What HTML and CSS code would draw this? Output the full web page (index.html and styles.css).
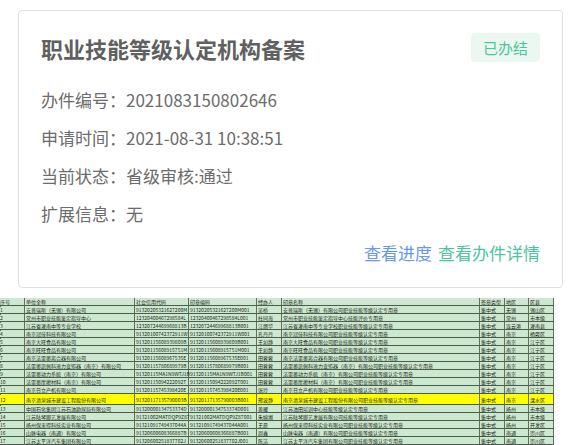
FILE: index.html
```html
<!DOCTYPE html>
<html lang="zh-CN">
<head>
<meta charset="utf-8">
<meta name="viewport" content="width=device-width, initial-scale=1">
<title>职业技能等级认定机构备案</title>
<link rel="stylesheet" href="styles.css">
</head>
<body>
<main>
<section class="card">
  <header class="card-head">
    <h1>职业技能等级认定机构备案</h1>
    <span class="badge">已办结</span>
  </header>
  <dl class="info">
    <div><dt>办件编号：</dt><dd>2021083150802646</dd></div>
    <div><dt>申请时间：</dt><dd>2021-08-31 10:38:51</dd></div>
    <div><dt>当前状态：</dt><dd>省级审核:通过</dd></div>
    <div><dt>扩展信息：</dt><dd>无</dd></div>
  </dl>
  <nav class="actions">
    <a class="progress" href="#progress">查看进度</a>
    <a class="detail" href="#detail">查看办件详情</a>
  </nav>
</section>
<div class="sheet">
<table>
  <colgroup><col class="c-no"><col class="c-unit"><col class="c-code"><col class="c-seal"><col class="c-agent"><col class="c-name"><col class="c-type"><col class="c-city"><col class="c-area"></colgroup>
  <thead>
    <tr><th>序号</th><th>单位全称</th><th>社会信用代码</th><th>印章编码</th><th>经办人</th><th>印章名称</th><th>签章类型</th><th>地区</th><th>区县</th></tr>
  </thead>
  <tbody>
    <tr><td>1</td><td>安普瑞斯（无锡）有限公司</td><td>91320205321627200M</td><td>91320205321627200M001</td><td>吴桥</td><td>安普瑞斯（无锡）有限公司职业技能等级认定专用章</td><td>集中式</td><td>无锡</td><td>锡山区</td></tr>
    <tr><td>2</td><td>常州市职业技能鉴定指导中心</td><td>12320400467298584L</td><td>12320400467298584L001</td><td>杜同海</td><td>常州市职业技能鉴定指导中心技能评价专用章</td><td>集中式</td><td>常州</td><td>市本级</td></tr>
    <tr><td>3</td><td>江苏省灌南中等专业学校</td><td>12320724469968813B</td><td>12320724469968813B001</td><td>江熠华</td><td>江苏省灌南中等专业学校职业技能等级认定专用章</td><td>集中式</td><td>连云港</td><td>灌南县</td></tr>
    <tr><td>4</td><td>南京冠佳科技有限公司</td><td>91320100742372911W</td><td>91320100742372911W001</td><td>孔丹丹</td><td>南京冠佳科技有限公司职业技能等级认定专用章</td><td>集中式</td><td>南京</td><td>栖霞区</td></tr>
    <tr><td>5</td><td>南京大旺食品有限公司</td><td>91320115608939809B</td><td>91320115608939809B001</td><td>王如静</td><td>南京大旺食品有限公司职业技能等级认定专用章</td><td>集中式</td><td>南京</td><td>江宁区</td></tr>
    <tr><td>6</td><td>南京旺旺食品有限公司</td><td>91320115608915751M</td><td>91320115608915751M001</td><td>王如静</td><td>南京旺旺食品有限公司职业技能等级认定专用章</td><td>集中式</td><td>南京</td><td>江宁区</td></tr>
    <tr><td>7</td><td>南京法雷奥离合器有限公司</td><td>91320115608967535E</td><td>91320115608967535E001</td><td>田蓉蓉</td><td>南京法雷奥离合器有限公司职业技能等级认定专用章</td><td>集中式</td><td>南京</td><td>江宁区</td></tr>
    <tr><td>8</td><td>法雷奥凯佩科液力变矩器（南京）有限公司</td><td>91320115780689979B</td><td>91320115780689979B001</td><td>田蓉蓉</td><td>法雷奥凯佩科液力变矩器（南京）有限公司职业技能等级认定专用章</td><td>集中式</td><td>南京</td><td>江宁区</td></tr>
    <tr><td>9</td><td>法雷奥动力系统（南京）有限公司</td><td>91320115MA1N9WTJ1B</td><td>91320115MA1N9WTJ1B001</td><td>田蓉蓉</td><td>法雷奥动力系统（南京）有限公司职业技能等级认定专用章</td><td>集中式</td><td>南京</td><td>江宁区</td></tr>
    <tr><td>10</td><td>法雷奥摩擦材料（南京）有限公司</td><td>91320115094222092T</td><td>91320115094222092T001</td><td>田蓉蓉</td><td>法雷奥摩擦材料（南京）有限公司职业技能等级认定专用章</td><td>集中式</td><td>南京</td><td>江宁区</td></tr>
    <tr><td>11</td><td>南京日立产机有限公司</td><td>91320115745398420E</td><td>91320115745398420E001</td><td>张玲</td><td>南京日立产机有限公司职业技能等级认定专用章</td><td>集中式</td><td>南京</td><td>江宁区</td></tr>
    <tr class="marked"><td>12</td><td>南京清泉城市建设工程股份有限公司</td><td>91320117135790003B</td><td>91320117135790003B001</td><td>邢波静</td><td>南京清泉城市建设工程股份有限公司职业技能等级认定专用章</td><td>集中式</td><td>南京</td><td>溧水区</td></tr>
    <tr><td>13</td><td>中国石化集团江苏石油勘探局有限公司</td><td>91320000134753374D</td><td>91320000134753374D001</td><td>黄耀</td><td>江苏油田培训中心技能等级认定专用章</td><td>集中式</td><td>扬州</td><td>市本级</td></tr>
    <tr><td>14</td><td>江苏陆琴脚艺发展有限公司</td><td>91321002MATDQP9Z87</td><td>91321002MATDQP9Z87001</td><td>朱婉湘</td><td>江苏陆琴脚艺发展有限公司技能等级认定专用章</td><td>集中式</td><td>扬州</td><td>市本级</td></tr>
    <tr><td>15</td><td>扬州保来得科技实业有限公司</td><td>91321091749437044A</td><td>91321091749437044A001</td><td>王晨</td><td>扬州保来得科技实业有限公司职业技能等级认定专用章</td><td>集中式</td><td>扬州</td><td>开发区</td></tr>
    <tr><td>16</td><td>山脉电器（南通）有限公司</td><td>91320600608366887B</td><td>91320600608366887B001</td><td>周鑫</td><td>山脉电器（南通）有限公司职业技能等级认定专用章</td><td>集中式</td><td>南通</td><td>崇川区</td></tr>
    <tr><td>17</td><td>江苏太平洋汽车集团有限公司</td><td>91320600251837702J</td><td>91320600251837702J001</td><td>陈洁</td><td>江苏太平洋汽车集团有限公司职业技能等级认定专用章</td><td>集中式</td><td>南通</td><td>崇川区</td></tr>
  </tbody>
</table>
</div>
</main>
</body>
</html>
```
FILE: styles.css
```css
* {
  box-sizing: border-box;
}

body {
  margin: 0;
  background: #fff;
  color: #6c6c6c;
  font-family: "Noto Sans CJK SC", sans-serif;
}

.card {
  margin: 10px 15px 10px 18px;
  padding: 22px;
  border: 1px solid #e0e0e0;
  border-radius: 4px;
}

.card-head {
  display: flex;
  justify-content: space-between;
  align-items: flex-start;
}

h1 {
  margin: 0;
  color: #606060;
  font-size: 22px;
  line-height: 30px;
  font-weight: 700;
}

.badge {
  padding: 0 12px;
  border-radius: 4px;
  background: #ebf8f2;
  color: #4cc4a0;
  font-size: 15px;
  line-height: 29px;
}

.info {
  margin: 18px 0 0;
  font-size: 17px;
  line-height: 38px;
}

.info div {
  display: flex;
}

.info dd {
  margin: 0;
}

.actions {
  display: flex;
  justify-content: flex-end;
  gap: 6px;
  font-size: 17px;
  line-height: 24px;
  margin-top: 8px;
}

.actions a {
  text-decoration: none;
}

.progress {
  color: #6797ea;
}

.detail {
  color: #4cc4a0;
}

.sheet {
  padding-right: 24px;
}

table {
  width: 100%;
  table-layout: fixed;
  border-collapse: separate;
  border-spacing: 0;
  background: #cce8cf;
  color: #1c2620;
  font-size: 5px;
  line-height: 7px;
}

th,
td {
  height: 8px;
  padding: 0 0 0 1px;
  border-right: 1px solid #60705f;
  border-bottom: 1px solid #4c5a4d;
  font-weight: 400;
  text-align: left;
  vertical-align: middle;
  white-space: nowrap;
}

td:first-child,
th:first-child {
  padding-left: 0;
}

td:first-child {
  background: linear-gradient(135deg, #2f8a45 1px, transparent 1px);
}

.marked {
  background: #ff0;
}

.marked td {
  height: 11px;
}

.c-no,
.c-agent,
.c-type,
.c-area {
  width: 25px;
}

.c-unit {
  width: 110px;
}

.c-code {
  width: 54px;
}

.c-seal {
  width: 68px;
}

.c-name {
  width: 198px;
}

.c-city {
  width: 24px;
}
```
